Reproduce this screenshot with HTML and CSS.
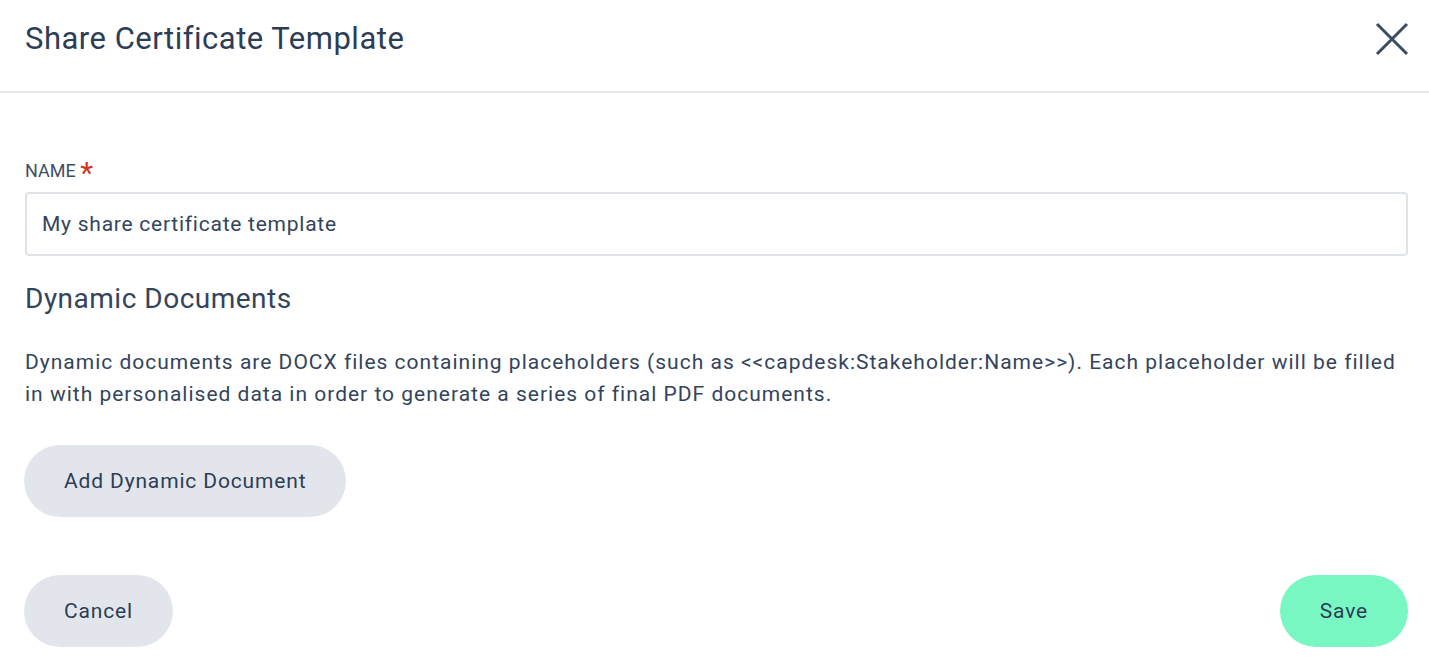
FILE: index.html
```html
<!DOCTYPE html>
<html lang="en">
<head>
    <meta charset="UTF-8">
    <meta name="viewport" content="width=device-width, initial-scale=1.0">
    <title>Share Certificate Template</title>
    <link rel="stylesheet" href="styles.css">
</head>
<body>
    <div class="modal">
        <div class="modal-header">
            <h1>Share Certificate Template</h1>
            <button class="close" type="button" aria-label="Close">
                <svg width="34" height="34" viewBox="0 0 34 34">
                    <path d="M2 2 L32 32 M32 2 L2 32" stroke="#3b4b61" stroke-width="3" fill="none"/>
                </svg>
            </button>
        </div>
        <form class="modal-body">
            <label class="field-label" for="name">NAME <span class="req">*</span></label>
            <input type="text" id="name" value="My share certificate template">

            <h2>Dynamic Documents</h2>
            <p>Dynamic documents are DOCX files containing placeholders (such as &lt;&lt;capdesk:Stakeholder:Name&gt;&gt;). Each placeholder will be filled in with personalised data in order to generate a series of final PDF documents.</p>

            <div class="add-row">
                <button type="button" class="btn">Add Dynamic Document</button>
            </div>

            <div class="actions">
                <button type="button" class="btn">Cancel</button>
                <button type="submit" class="btn btn-save">Save</button>
            </div>
        </form>
    </div>
</body>
</html>
```

FILE: styles.css
```css
body {
    margin: 0;
    font-family: Roboto, "Liberation Sans", sans-serif;
    color: #33445c;
    background-color: #fff;
}
.modal {
    width: 1429px;
}
.modal-header {
    display: flex;
    align-items: center;
    justify-content: space-between;
    height: 91px;
    padding: 0 20px 0 25px;
    border-bottom: 2px solid #e3e7eb;
}
.modal-header h1 {
    margin: 0 0 15px 0;
    font-size: 31px;
    font-weight: 400;
    letter-spacing: 0.5px;
    color: #2c3d55;
}
.close {
    background: none;
    border: none;
    padding: 0;
    margin-bottom: 14px;
    cursor: pointer;
    display: flex;
}
.modal-body {
    padding: 67px 21px 0 25px;
}
.field-label {
    display: block;
    font-size: 18px;
    color: #3f4e63;
    line-height: 22px;
}
.req {
    color: #d2321f;
    font-size: 30px;
    line-height: 10px;
    vertical-align: -6px;
}
input {
    display: block;
    box-sizing: border-box;
    width: 100%;
    height: 64px;
    margin-top: 10px;
    padding: 0 15px;
    border: 2px solid #dfe3e8;
    border-radius: 4px;
    font-family: inherit;
    font-size: 21px;
    letter-spacing: 0.75px;
    color: #33445c;
}
h2 {
    margin: 26px 0 0 0;
    font-size: 28px;
    font-weight: 400;
    letter-spacing: 0.5px;
    line-height: 34px;
}
p {
    margin: 30px 0 0 0;
    font-size: 21px;
    letter-spacing: 1px;
    line-height: 32px;
}
.btn {
    height: 72px;
    padding: 0 40px;
    border: none;
    border-radius: 36px;
    background-color: #e2e6ec;
    font-family: inherit;
    font-size: 21px;
    letter-spacing: 0.85px;
    color: #2c3d55;
    cursor: pointer;
}
.add-row {
    margin-top: 35px;
    margin-left: -1px;
}
.actions {
    display: flex;
    justify-content: space-between;
    margin-top: 58px;
    margin-left: -1px;
}
.btn-save {
    background-color: #79f7c3;
}
```
